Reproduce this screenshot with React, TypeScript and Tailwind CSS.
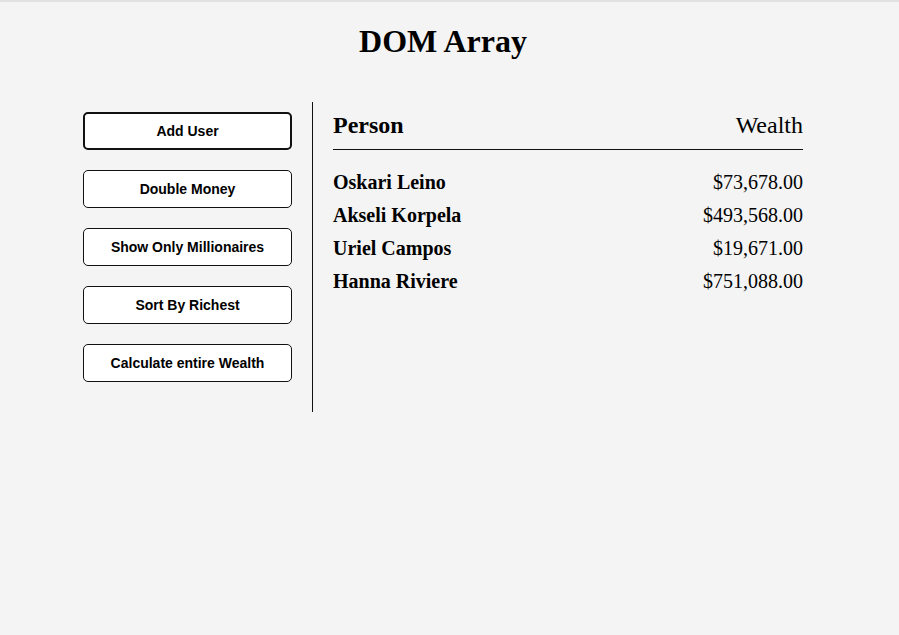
import React from "react";

const people = [
  { name: "Oskari Leino", wealth: "$73,678.00" },
  { name: "Akseli Korpela", wealth: "$493,568.00" },
  { name: "Uriel Campos", wealth: "$19,671.00" },
  { name: "Hanna Riviere", wealth: "$751,088.00" },
];

const buttons = [
  "Add User",
  "Double Money",
  "Show Only Millionaires",
  "Sort By Richest",
  "Calculate entire Wealth",
];

export default function App() {
  return (
    <div
      className="min-h-screen w-full bg-[#f4f4f4] text-black border-t-2 border-[#e2e2e2]"
      style={{ fontFamily: '"Liberation Serif", "Times New Roman", serif' }}
    >
      <div className="w-[886px] flex flex-col items-center">
        <h1 className="mt-[21px] text-[32px] leading-[37px] font-bold">DOM Array</h1>
        <div className="mt-[42px] w-[760px] flex">
          <aside className="w-[250px] shrink-0 px-5 pt-[10px] pb-[30px] border-r border-[#111] flex flex-col gap-5">
            {buttons.map((b, i) => (
              <button
                key={b}
                className={
                  "w-full bg-white rounded-[5px] text-[14px] leading-[16px] font-bold text-black " +
                  (i === 0
                    ? "border-2 border-[#111] py-[9px]"
                    : "border border-[#111] py-[10px]")
                }
                style={{ fontFamily: '"Liberation Sans", Arial, sans-serif' }}
              >
                {b}
              </button>
            ))}
          </aside>
          <main className="flex-1 px-5 pt-[10px]">
            <h2 className="flex justify-between text-[24px] leading-[27px] border-b border-[#111] pb-[10px] mb-[21px]">
              <strong className="font-bold">Person</strong>
              <span className="font-normal">Wealth</span>
            </h2>
            {people.map((p) => (
              <div key={p.name} className="flex justify-between text-[20px] leading-[23px] mb-[10px]">
                <strong className="font-bold">{p.name}</strong>
                <span>{p.wealth}</span>
              </div>
            ))}
          </main>
        </div>
      </div>
    </div>
  );
}
